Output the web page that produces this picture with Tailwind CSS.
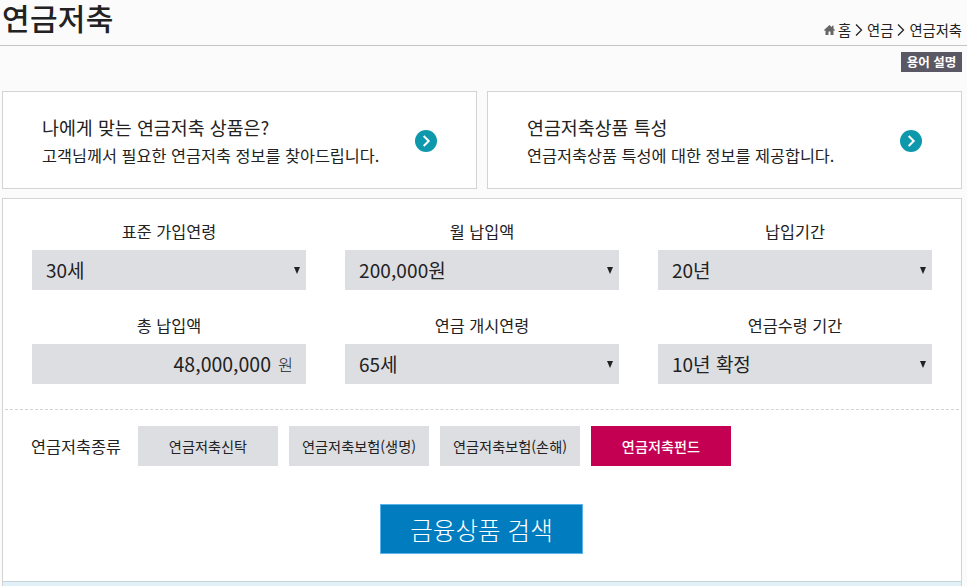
<!DOCTYPE html>
<html lang="ko">
<head>
  <meta charset="UTF-8" />
  <title>연금저축</title>
  <script src="https://cdn.jsdelivr.net/npm/@tailwindcss/browser@4"></script>
</head>
<body
  class="bg-[#fbfbfb] font-['Noto_Sans_CJK_KR',sans-serif] text-[#222] w-[967px] h-[586px] overflow-hidden whitespace-nowrap"
>
  <header class="flex justify-between h-[46px] border-b border-[#c4c4c4] pl-[2px] pr-[5px]">
    <h1 class="text-[30px] leading-[34px] tracking-[0.3px] font-medium">연금저축</h1>
    <nav class="flex items-center h-5 mt-5 text-[14.3px] leading-5">
      <svg class="w-[11px] h-[10px] mr-[3px]" viewBox="0 0 11 10" fill="#666">
        <path d="M5.5 0 0 5l.8.9.7-.6V10h3V6.500h2V10h3V5.300l.7.6.8-.9-1.500-1.400V.8H8v1.500z" />
      </svg>
      <span>홈</span>
      <svg class="w-2 h-3 mx-1" viewBox="0 0 8 12" fill="none" stroke="#222" stroke-width="1.300"><path d="M1 .5 6.500 6 1 11.500" /></svg>
      <span>연금</span>
      <svg class="w-2 h-3 mx-1" viewBox="0 0 8 12" fill="none" stroke="#222" stroke-width="1.300"><path d="M1 .5 6.500 6 1 11.500" /></svg>
      <span>연금저축</span>
    </nav>
  </header>

  <div class="flex justify-end pt-[6px] pr-[5px] h-[45px]">
    <a class="w-[61px] h-5 bg-[#5b5865] text-white text-[12.5px] leading-5 font-bold text-center">용어 설명</a>
  </div>

  <section class="flex gap-[10px] pl-[2px]">
    <a class="flex items-center justify-between w-[475px] h-[98px] bg-white border border-[#d3d3d3] pt-[2px] pl-[39px] pr-[39px]">
      <div>
        <h2 class="text-[18.4px] leading-[27px] font-normal">나에게 맞는 연금저축 상품은?</h2>
        <p class="text-[16.3px] leading-[28px]">고객님께서 필요한 연금저축 정보를 찾아드립니다.</p>
      </div>
      <svg class="w-[22px] h-[22px]" viewBox="0 0 22 22" fill="none">
        <circle cx="11" cy="11" r="11" fill="#0d98ac" />
        <path d="m8.700 6 5 5-5 5" stroke="#fff" stroke-width="2" />
      </svg>
    </a>
    <a class="flex items-center justify-between w-[475px] h-[98px] bg-white border border-[#d3d3d3] pt-[2px] pl-[39px] pr-[39px]">
      <div>
        <h2 class="text-[18.4px] leading-[27px] font-normal">연금저축상품 특성</h2>
        <p class="text-[16.3px] leading-[28px]">연금저축상품 특성에 대한 정보를 제공합니다.</p>
      </div>
      <svg class="w-[22px] h-[22px]" viewBox="0 0 22 22" fill="none">
        <circle cx="11" cy="11" r="11" fill="#0d98ac" />
        <path d="m8.700 6 5 5-5 5" stroke="#fff" stroke-width="2" />
      </svg>
    </a>
  </section>

  <main class="mt-[9px] ml-[2px] w-[960px] h-[388px] bg-white border border-b-0 border-[#d3d3d3]">
    <div class="grid grid-cols-3 gap-x-[39px] gap-y-[10px] pl-[29px] pr-[29px] pt-[15px] h-[210px] content-start">
      <div>
        <div class="h-9 text-[16.3px] leading-[34px] text-center">표준 가입연령</div>
        <div class="flex items-center justify-between h-10 bg-[#dddee2] pl-[14px] pr-[6px] text-[19px] leading-10">
          <span>30세</span>
          <svg class="w-[6px] h-[7px]" viewBox="0 0 6 7" fill="#222"><path d="M0 0h6L3 7z" /></svg>
        </div>
      </div>
      <div>
        <div class="h-9 text-[16.3px] leading-[34px] text-center">월 납입액</div>
        <div class="flex items-center justify-between h-10 bg-[#dddee2] pl-[14px] pr-[6px] text-[19px] leading-10">
          <span class="tracking-[0.1px]">200,000원</span>
          <svg class="w-[6px] h-[7px]" viewBox="0 0 6 7" fill="#222"><path d="M0 0h6L3 7z" /></svg>
        </div>
      </div>
      <div>
        <div class="h-9 text-[16.3px] leading-[34px] text-center">납입기간</div>
        <div class="flex items-center justify-between h-10 bg-[#dddee2] pl-[14px] pr-[6px] text-[19px] leading-10">
          <span>20년</span>
          <svg class="w-[6px] h-[7px]" viewBox="0 0 6 7" fill="#222"><path d="M0 0h6L3 7z" /></svg>
        </div>
      </div>
      <div class="mt-2">
        <div class="h-9 text-[16.3px] leading-[34px] text-center">총 납입액</div>
        <div class="flex items-center justify-end h-10 bg-[#dddee2] pr-[13px] leading-10">
          <span class="text-[19.5px]">48,000,000</span>
          <span class="ml-[7px] text-[16.3px] leading-[38px] font-light">원</span>
        </div>
      </div>
      <div class="mt-2">
        <div class="h-9 text-[16.3px] leading-[34px] text-center">연금 개시연령</div>
        <div class="flex items-center justify-between h-10 bg-[#dddee2] pl-[14px] pr-[6px] text-[19px] leading-10">
          <span>65세</span>
          <svg class="w-[6px] h-[7px]" viewBox="0 0 6 7" fill="#222"><path d="M0 0h6L3 7z" /></svg>
        </div>
      </div>
      <div class="mt-2">
        <div class="h-9 text-[16.3px] leading-[34px] text-center">연금수령 기간</div>
        <div class="flex items-center justify-between h-10 bg-[#dddee2] pl-[14px] pr-[6px] text-[19px] leading-10">
          <span>10년 확정</span>
          <svg class="w-[6px] h-[7px]" viewBox="0 0 6 7" fill="#222"><path d="M0 0h6L3 7z" /></svg>
        </div>
      </div>
    </div>

    <div class="mx-[2px] border-t border-dashed border-[#d3d3d3]"></div>

    <div class="flex items-center pl-[28px] mt-4 h-10">
      <span class="w-[107px] text-[16.3px]">연금저축종류</span>
      <div class="flex gap-[11px] text-[14.2px] leading-10 text-center">
        <button class="w-[140px] h-10 bg-[#dddee2]">연금저축신탁</button>
        <button class="w-[140px] h-10 bg-[#dddee2]">연금저축보험(생명)</button>
        <button class="w-[140px] h-10 bg-[#dddee2]">연금저축보험(손해)</button>
        <button class="w-[140px] h-10 bg-[#c40052] text-white font-medium">연금저축펀드</button>
      </div>
    </div>

    <button class="block mt-[38px] ml-[377px] w-[203px] h-[50px] bg-[#007cbf] border border-[#5cb3ea] text-white text-[24.6px] leading-[48px] font-light text-center">금융상품 검색</button>

    <div class="mt-[27px] h-[5px] bg-[#e2f0f7] border-t border-[#c5d5dc]"></div>
  </main>
</body>
</html>
